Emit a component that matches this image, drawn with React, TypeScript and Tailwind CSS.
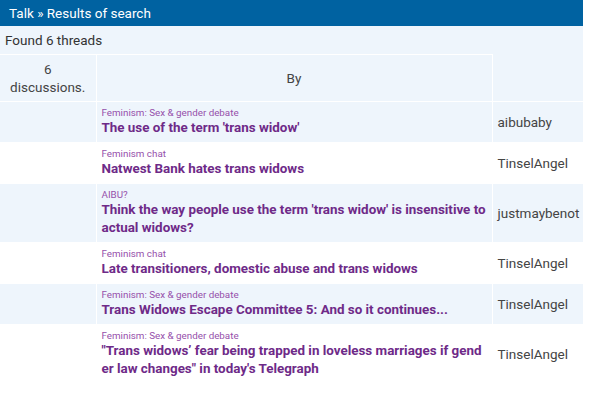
import React from 'react';

const threads = [
  { topic: 'Feminism: Sex & gender debate', title: "The use of the term 'trans widow'", by: 'aibubaby' },
  { topic: 'Feminism chat', title: 'Natwest Bank hates trans widows', by: 'TinselAngel' },
  { topic: 'AIBU?', title: "Think the way people use the term 'trans widow' is insensitive to actual widows?", by: 'justmaybenot' },
  { topic: 'Feminism chat', title: 'Late transitioners, domestic abuse and trans widows', by: 'TinselAngel' },
  { topic: 'Feminism: Sex & gender debate', title: 'Trans Widows Escape Committee 5: And so it continues...', by: 'TinselAngel' },
  { topic: 'Feminism: Sex & gender debate', title: '"Trans widows\u2019 fear being trapped in loveless marriages if gender law changes" in today\'s Telegraph', by: 'TinselAngel' },
];

const App: React.FC = () => {
  return (
    <div className="min-h-screen bg-white font-['Roboto',sans-serif]">
      <div className="w-[583px]">
        {/* Title bar */}
        <div className="h-[26px] bg-[#0062a1] px-[9px] flex items-center text-[13.5px] text-white">
          Talk » Results of search
        </div>

        <div className="bg-[#eef5fc]">
          <div className="h-[28px] px-[5px] flex items-center text-[13.5px] text-[#333]">
            Found 6 threads
          </div>

          <table className="w-full border-collapse table-fixed">
            <colgroup>
              <col className="w-[96px]" />
              <col className="w-[396px]" />
              <col />
            </colgroup>
            <thead>
              <tr>
                <th className="border border-white border-l-0 px-[5px] py-[5px] text-[13.5px] leading-[18px] font-normal text-[#444] text-center">
                  6
                  <br />
                  discussions.
                </th>
                <th className="border border-white px-[5px] py-[5px] text-[13.5px] leading-[18px] font-normal text-[#444] text-center">
                  By
                </th>
                <th className="border-0"></th>
              </tr>
            </thead>
            <tbody>
              {threads.map((t, i) => (
                <tr key={i} className={i % 2 === 0 ? 'bg-[#eef5fc]' : 'bg-white'}>
                  <td className="border border-white border-l-0"></td>
                  <td className="border border-white pl-[5px] pr-[3px] py-[5px] align-middle">
                    <div className="text-[9.8px] leading-[12px] text-[#9650ab]">{t.topic}</div>
                    <div className="text-[13.4px] leading-[18px] font-bold text-[#6e2a88] break-all">
                      {t.title}
                    </div>
                  </td>
                  <td className="border border-white border-r-0 px-[5px] text-[13.5px] text-[#444] align-middle whitespace-nowrap">
                    {t.by}
                  </td>
                </tr>
              ))}
            </tbody>
          </table>
        </div>
      </div>
    </div>
  );
};

export default App;
